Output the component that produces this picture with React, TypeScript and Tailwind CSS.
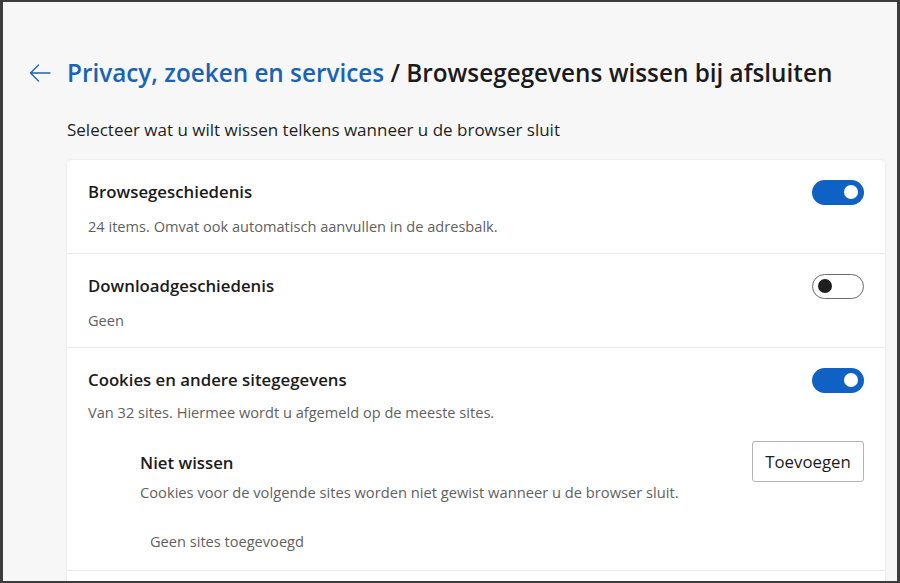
import React from "react";

function Toggle({ on }: { on: boolean }) {
  if (on) {
    return (
      <div className="w-[52px] h-[25px] rounded-full bg-[#0f61c4] flex items-center justify-end pr-[6px] shrink-0">
        <span className="w-[14px] h-[14px] rounded-full bg-white" />
      </div>
    );
  }
  return (
    <div className="w-[52px] h-[25px] rounded-full border border-[#6b6b6b] bg-white flex items-center pl-[5px] shrink-0">
      <span className="w-[14px] h-[14px] rounded-full bg-[#1f1f1f]" />
    </div>
  );
}

const rows = [
  { title: "Browsegeschiedenis", desc: "24 items. Omvat ook automatisch aanvullen in de adresbalk.", on: true },
  { title: "Downloadgeschiedenis", desc: "Geen", on: false },
];

export default function App() {
  return (
    <div
      className="w-[900px] h-[583px] overflow-hidden bg-[#f7f7f7] border-t-2 border-l-[3px] border-r-[3px] border-b-2 border-[#3c3c3c] text-[#1b1b1b]"
      style={{ fontFamily: "'Open Sans', 'Noto Sans', sans-serif" }}
    >
      {/* Header */}
      <div className="flex items-center pt-[55px] pl-[25px]">
        <svg width="24" height="20" viewBox="0 0 24 20" className="shrink-0" fill="none" stroke="#1f64b4" strokeWidth="1.4" strokeLinecap="round" strokeLinejoin="round">
          <path d="M22 10H2.5M10.5 2L2.5 10l8 8" />
        </svg>
        <h1 className="ml-[15px] text-[24.3px] leading-[32px] font-semibold whitespace-nowrap">
          <span className="text-[#1a63b4]">Privacy, zoeken en services</span> / Browsegegevens wissen bij afsluiten
        </h1>
      </div>

      <p className="ml-[64px] mt-[30px] text-[17px] leading-[22px] text-[#1f1f1f]">
        Selecteer wat u wilt wissen telkens wanneer u de browser sluit
      </p>

      {/* Card */}
      <div className="ml-[64px] mt-[19px] w-[818px] bg-white rounded-[4px] shadow-[0_0_2px_rgba(0,0,0,0.12),0_1px_2px_rgba(0,0,0,0.06)]">
        {rows.map((r) => (
          <div key={r.title} className="px-[21px] pt-[21px] pb-[17px] border-b border-[#ececec]">
            <div className="flex items-center justify-between h-[22px]">
              <span className="text-[16.8px] font-semibold">{r.title}</span>
              <Toggle on={r.on} />
            </div>
            <p className="mt-[13px] text-[14.6px] leading-[20px] text-[#5f5f5f]">{r.desc}</p>
          </div>
        ))}

        <div className="px-[21px] pt-[21px] pb-[19px] border-b border-[#ececec]">
          <div className="flex items-center justify-between h-[22px]">
            <span className="text-[16.8px] font-semibold">Cookies en andere sitegegevens</span>
            <Toggle on />
          </div>
          <p className="mt-[11px] text-[14.6px] leading-[20px] text-[#5f5f5f]">
            Van 32 sites. Hiermee wordt u afgemeld op de meeste sites.
          </p>

          <div className="ml-[52px] mt-[19px]">
            <div className="flex items-center justify-between h-[41px]">
              <span className="text-[16.8px] font-semibold mt-[3px]">Niet wissen</span>
              <button className="h-[41px] w-[112px] border border-[#b3b3b3] rounded-[3px] bg-white text-[16.8px] text-[#1b1b1b]">
                Toevoegen
              </button>
            </div>
            <p className="text-[14.7px] leading-[20px] text-[#5f5f5f]">
              Cookies voor de volgende sites worden niet gewist wanneer u de browser sluit.
            </p>
            <p className="ml-[10px] mt-[29px] text-[14.6px] leading-[20px] text-[#5f5f5f]">Geen sites toegevoegd</p>
          </div>
        </div>
        <div className="h-[20px]" />
      </div>
    </div>
  );
}
